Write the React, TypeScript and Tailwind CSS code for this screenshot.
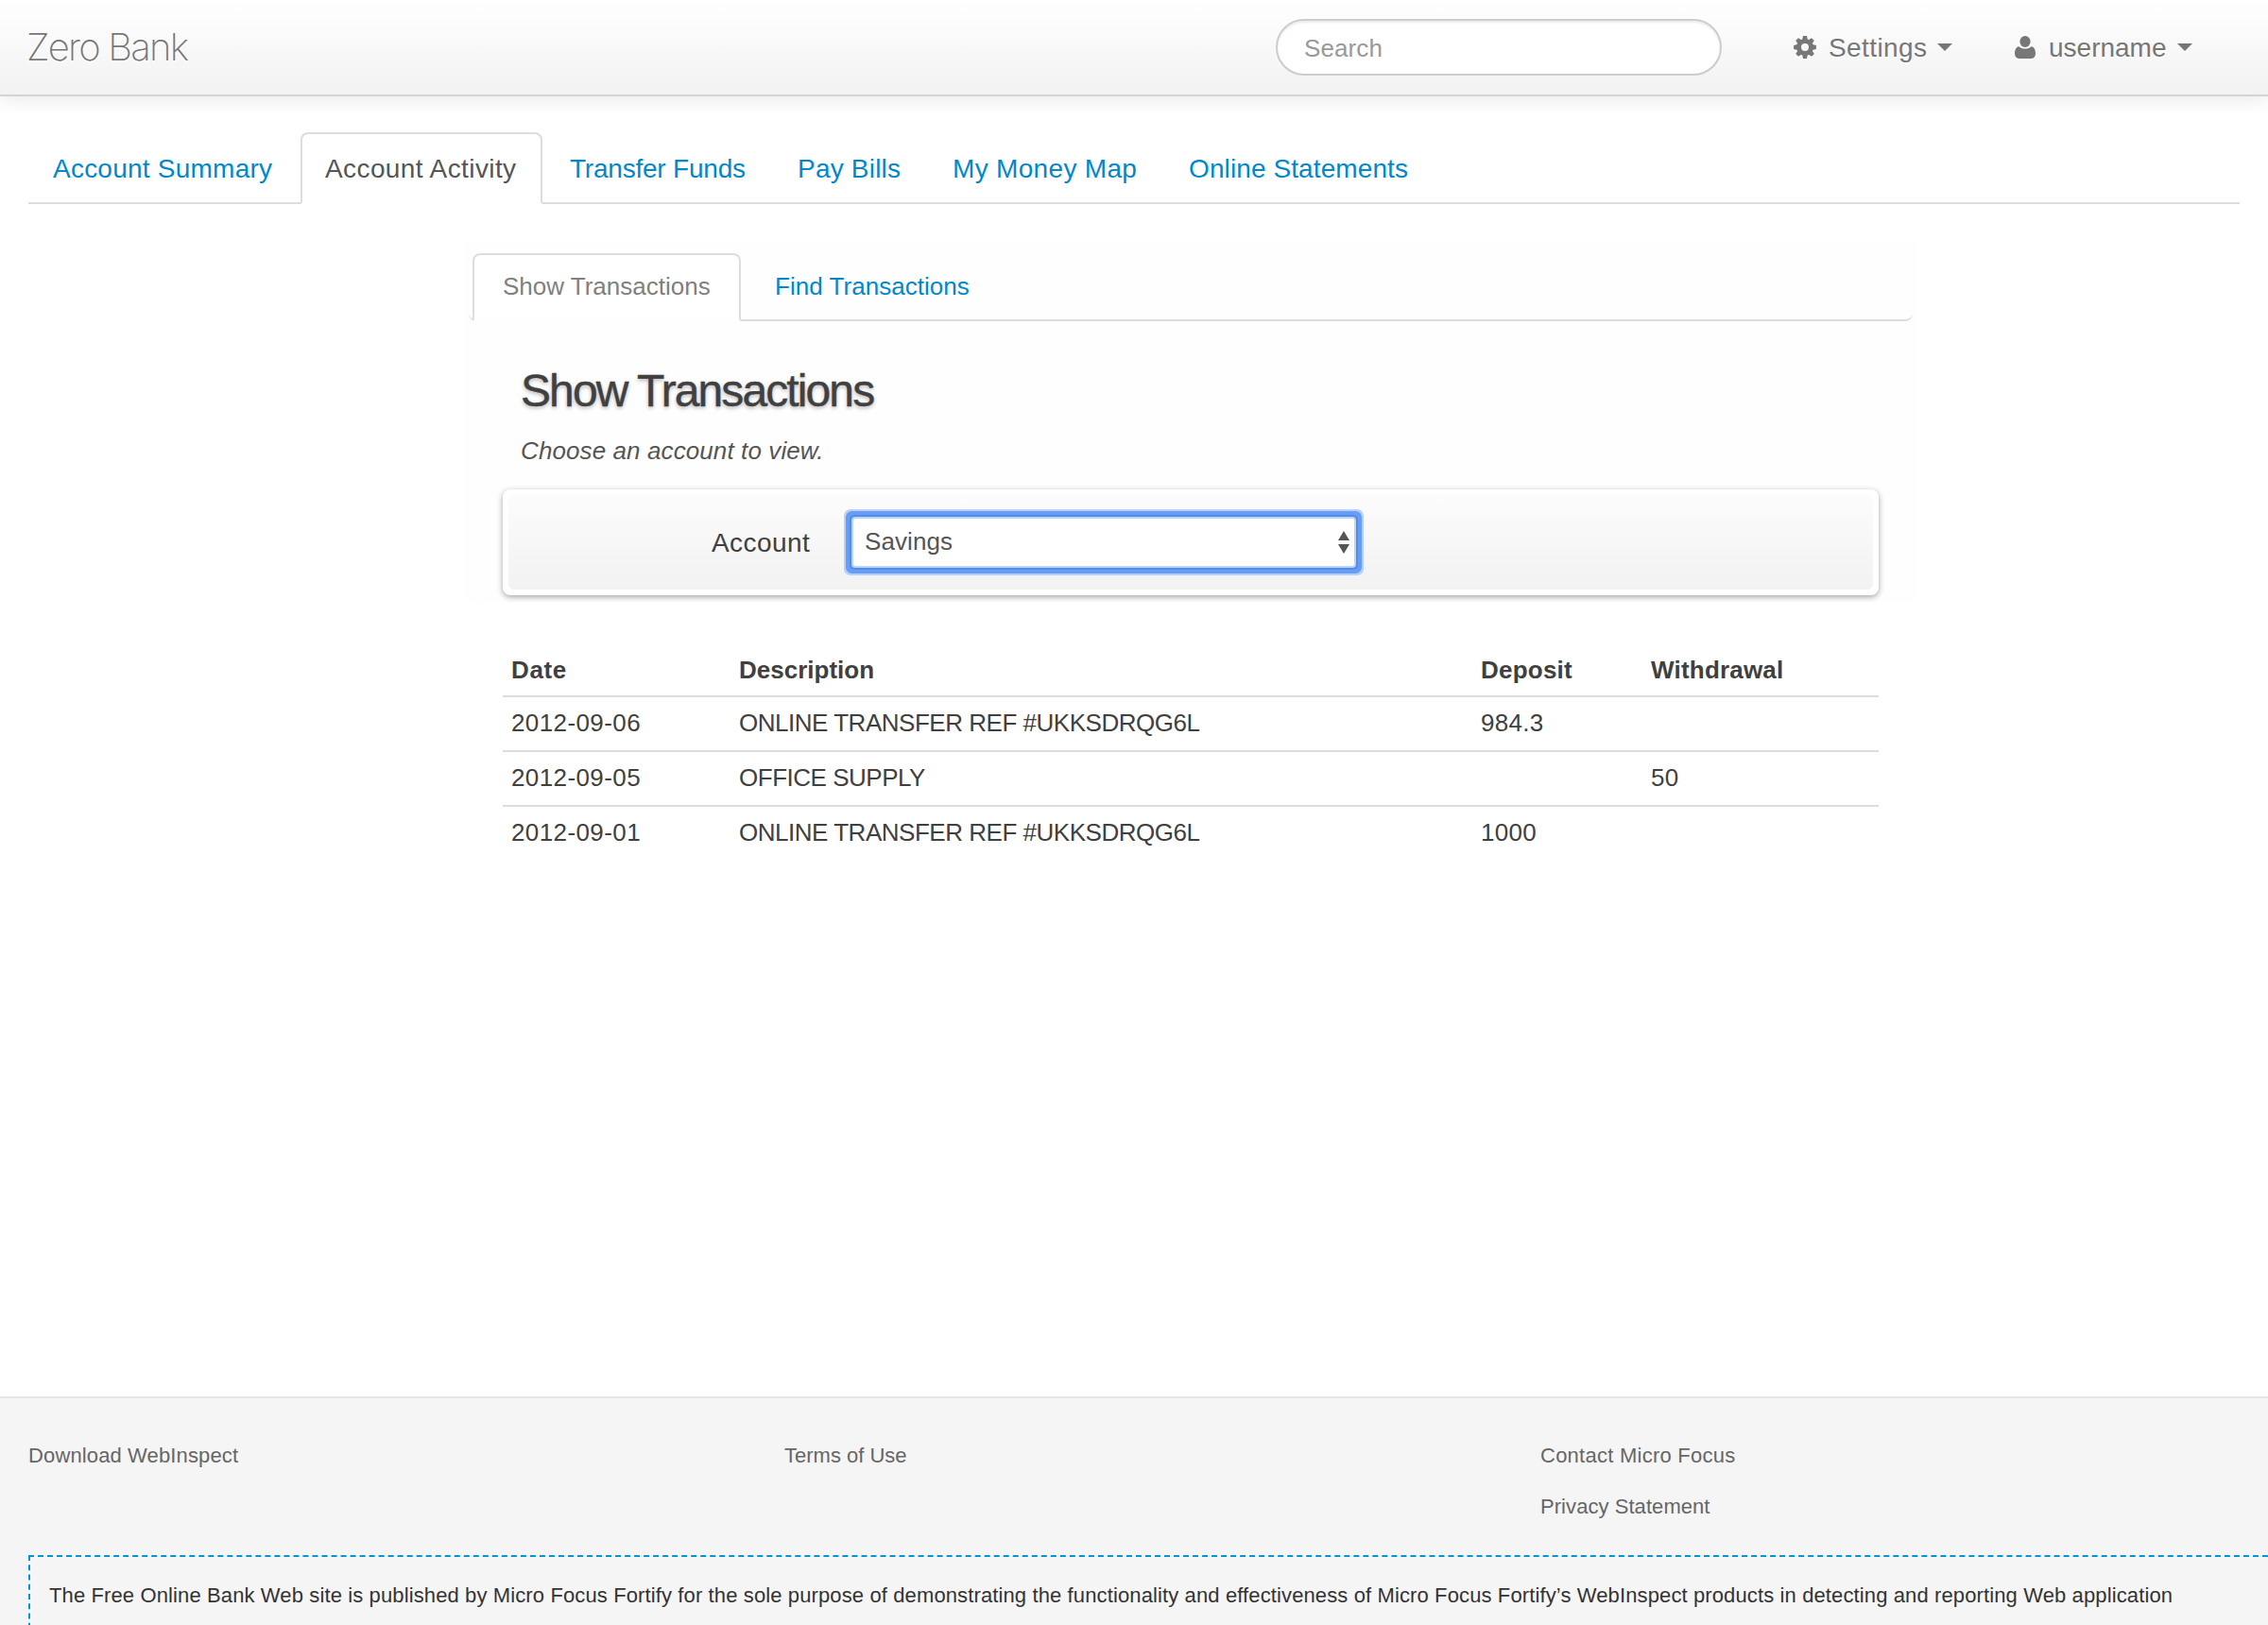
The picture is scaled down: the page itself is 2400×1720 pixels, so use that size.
import React from "react";

const Caret = () => (
  <svg width="16" height="8" viewBox="0 0 16 8" className="shrink-0">
    <path d="M0 0h16L8 8z" fill="#777" />
  </svg>
);

const Cog = () => (
  <svg width="24" height="24" viewBox="0 0 24 24" className="shrink-0 drop-shadow-[0_2px_0_#fff]">
    <path
      fillRule="evenodd"
      fill="#777"
      d="M12 3a9 9 0 1 0 0 18a9 9 0 1 0 0-18zM12 8a4 4 0 1 1 0 8a4 4 0 1 1 0-8z"
    />
    {[0, 45, 90, 135, 180, 225, 270, 315].map((a) => (
      <path key={a} d="M10 0.1h4l.9 4.2h-5.8z" fill="#777" transform={`rotate(${a} 12 12)`} />
    ))}
  </svg>
);

const UserIcon = () => (
  <svg width="22" height="24" viewBox="0 0 22 24" className="shrink-0 drop-shadow-[0_2px_0_#fff]">
    <ellipse cx="11" cy="6" rx="5.6" ry="6" fill="#777" />
    <path
      fill="#777"
      d="M4.4 11.2C1.4 11.8 0 14.6 0 18.6C0 22 1.6 24 4.4 24h13.2c2.8 0 4.4-2 4.4-5.4c0-4-1.4-6.8-4.4-7.4c-1.6 1.5-3.8 2.3-6.6 2.3s-5-.8-6.6-2.3z"
    />
  </svg>
);

const tabs = [
  { label: "Account Summary", cls: "w-[284px] mr-1 pl-6 text-[#0088cc] tracking-[0.233px]" },
  { label: "Account Activity", cls: "w-[256px] mr-1 pl-6 text-[#555] tracking-[0.4px]", active: true },
  { label: "Transfer Funds", cls: "w-[235px] mr-1 pl-[23px] text-[#0088cc] tracking-[-0.216px]" },
  { label: "Pay Bills", cls: "w-[160px] mr-1 pl-[25px] text-[#0088cc] tracking-[0.204px]" },
  { label: "My Money Map", cls: "w-[247px] mr-1 pl-[25px] text-[#0088cc] tracking-[0.32px]" },
  { label: "Online Statements", cls: "w-[284px] pl-6 text-[#0088cc] tracking-[0.104px]" },
];

const rows = [
  ["2012-09-06", "ONLINE TRANSFER REF #UKKSDRQG6L", "984.3", ""],
  ["2012-09-05", "OFFICE SUPPLY", "", "50"],
  ["2012-09-01", "ONLINE TRANSFER REF #UKKSDRQG6L", "1000", ""],
];

const cols = "grid grid-cols-[241px_786px_180px_249px]";

export default function App() {
  return (
    <div className="flex h-[1720px] w-[2400px] flex-col overflow-hidden bg-white font-['Liberation_Sans',Arial,sans-serif] text-[26px] whitespace-nowrap text-[#404040]">
      <header className="flex h-[102px] shrink-0 items-center border-b-2 border-[#d4d4d4] bg-linear-to-b from-white to-[#f2f2f2] pr-[79px] pl-[28px] text-[28px] text-[#777] shadow-[0_2px_20px_rgba(0,0,0,0.1)] [text-shadow:0_2px_0_#fff]">
        <div className="flex-1 font-['Inter',sans-serif] text-[40px] font-[240] tracking-[-1.8px]">Zero Bank</div>
        <div className="flex h-[60px] w-[472px] items-center rounded-full border-2 border-[#ccc] bg-white pt-[2px] pl-[28px] text-[26px] tracking-[0.1px] text-[#999] shadow-[inset_0_2px_2px_rgba(0,0,0,0.075)]">
          Search
        </div>
        <div className="ml-[76px] flex items-center">
          <Cog />
          <span className="ml-[13px] w-[103px] pt-[2px] tracking-[0.404px]">Settings</span>
          <span className="ml-3">
            <Caret />
          </span>
        </div>
        <div className="ml-[66px] flex items-center">
          <UserIcon />
          <span className="ml-[14px] w-[123px] pt-[2px]">username</span>
          <span className="mr-px ml-[13px]">
            <Caret />
          </span>
        </div>
      </header>

      <nav className="mx-[30px] mt-[38px] flex h-[76px] shrink-0 border-b-2 border-[#ddd] text-[28px]">
        {tabs.map((t) => (
          <div
            key={t.label}
            className={`flex h-[76px] items-center border-2 pt-[2px] ${t.cls} ${
              t.active ? "rounded-t-[8px] border-[#ddd] border-b-transparent bg-white" : "border-transparent"
            }`}
          >
            {t.label}
          </div>
        ))}
      </nav>

      <main className="ml-[492px] mt-10 flex w-[1536px] flex-1 flex-col">
        <section className="bg-linear-to-b from-[#fefefe] from-95% to-white px-1 pt-3 pb-4">
          <div className="flex h-[72px] rounded-b-[8px] border-b-2 border-[#ddd] pl-1">
            <div className="flex h-[72px] w-[284px] items-center rounded-t-[8px] border-2 border-[#ddd] border-b-[#fefefe] bg-white pb-[2px] pl-[30px] text-[#808080]">
              Show Transactions
            </div>
            <div className="ml-1 flex h-[72px] items-center pb-[2px] pl-8 tracking-[0.04px] text-[#0088cc]">
              Find Transactions
            </div>
          </div>
          <div className="px-9">
            <h2 className="mt-[44px] pl-[19px] text-[48px] leading-[60px] tracking-[-1.9px] [-webkit-text-stroke:0.4px_#404040] [text-shadow:0_2px_4px_rgba(0,0,0,0.3)]">
              Show Transactions
            </h2>
            <p className="mt-[13px] pl-[19px] leading-10 tracking-[0.1px] text-[#555] italic">Choose an account to view.</p>
            <form className="mt-[21px] rounded-[8px] bg-white px-[6px] py-[6px] shadow-[0_2px_6px_rgba(0,0,0,0.36)]">
              <div className="flex h-[100px] items-center rounded-[6px] bg-linear-to-b from-[#fcfcfc] to-[#f2f2f2]">
                <label className="ml-[215px] w-[105px] pt-[2px] text-[28px] tracking-[0.435px] text-[#404040]">Account</label>
                <div className="ml-[45px] flex h-[50px] w-[530px] items-center justify-between rounded-[2px] bg-white pr-[5px] pl-3 text-[#555] shadow-[0_0_0_2px_#bcd6fb,0_0_0_4px_#548ce6,0_0_0_8px_#659df8,0_0_0_10px_#b9cff8]">
                  <span className="pb-[2px] tracking-[0.084px]">Savings</span>
                  <svg width="12" height="24" viewBox="0 0 12 24">
                    <path d="M6 0l6 10H0zM6 24l6-10H0z" fill="#555" />
                  </svg>
                </div>
              </div>
            </form>
          </div>
        </section>

        <section className="mt-9 ml-10 w-[1456px]">
          <div className={`${cols} h-[54px] items-center font-bold`}>
            <div className="pl-[9px] tracking-[0.6px]">Date</div>
            <div className="pl-[9px]">Description</div>
            <div className="pl-2 tracking-[0.219px]">Deposit</div>
            <div className="pl-2 tracking-[0.2px]">Withdrawal</div>
          </div>
          {rows.map((r) => (
            <div key={r[0]} className={`${cols} h-[58px] items-center border-t-2 border-[#ddd] pb-[2px]`}>
              <div className="pl-[9px] tracking-[0.4px]">{r[0]}</div>
              <div className="pl-[9px] tracking-[-0.48px]">{r[1]}</div>
              <div className="pl-2 tracking-[0.3px]">{r[2]}</div>
              <div className="pl-2 tracking-[0.3px]">{r[3]}</div>
            </div>
          ))}
        </section>
      </main>

      <footer className="h-[242px] shrink-0 border-t-2 border-[#e5e5e5] bg-[#f5f5f5] pl-[30px] text-[22px]">
        <div className="mt-[34px] grid h-[132px] grid-cols-[800px_800px_740px] leading-[54px] text-[#666]">
          <div className="tracking-[0.13px]">Download WebInspect</div>
          <div>Terms of Use</div>
          <div>
            <div className="tracking-[0.25px]">Contact Micro Focus</div>
            <div className="tracking-[0.06px]">Privacy Statement</div>
          </div>
        </div>
        <div className="h-[160px] w-[2400px] border-2 border-dashed border-[#0096d6] px-5 pt-[21px] leading-10 tracking-[0.12px] text-[#333]">
          The Free Online Bank Web site is published by Micro Focus Fortify for the sole purpose of demonstrating the functionality and
          effectiveness of Micro Focus Fortify’s WebInspect products in detecting and reporting Web application
        </div>
      </footer>
    </div>
  );
}
